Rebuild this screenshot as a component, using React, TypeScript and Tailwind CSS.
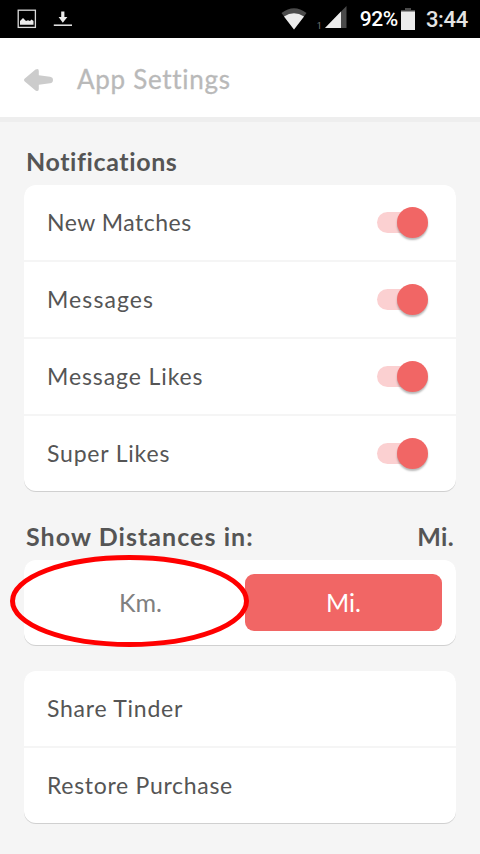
const notifications = ['New Matches', 'Messages', 'Message Likes', 'Super Likes'];
const links = ['Share Tinder', 'Restore Purchase'];

const textStyles: Record<string, string> = {
  'New Matches': 'tracking-[0.5px]',
  Messages: 'tracking-[1.1px]',
  'Message Likes': 'tracking-[0.9px]',
  'Super Likes': 'tracking-[0.8px]',
  'Share Tinder': 'tracking-[0.75px]',
  'Restore Purchase': 'tracking-[0.7px]',
};

const StatusBar = () => (
  <div className="flex h-[38px] shrink-0 items-center bg-black pt-px pr-3 pl-[17px] font-[Roboto,sans-serif] text-white">
    <svg className="-mt-px h-5 w-5" viewBox="0 0 20 20">
      <rect x="1.2" y="1.2" width="17.2" height="17.2" fill="none" stroke="#dcdcdc" strokeWidth="1.3" />
      <path d="M3 15.8V12l3-3 3 3 2-.8 2 .8 1.5-1.5 2 1.5v3.8z" fill="#ececec" />
    </svg>
    <svg className="-mt-px ml-4 h-5 w-5" viewBox="0 0 20 20">
      <path d="M8.2 2.5h3.2V8h3L9.8 13.8 5.6 8h2.6z" fill="#ececec" />
      <path d="M.8 16.2h18.2" stroke="#ececec" strokeWidth="1.5" />
    </svg>
    <svg className="-mt-0.5 ml-auto h-[22px] w-[26px]" viewBox="0 0 26 22">
      <path d="M0.5 5Q13-4.5 25.5 5L13 21.5z" fill="#4b4b4b" />
      <path d="M3 8.5Q13 2 23 8.5L13 21.5z" fill="#ececec" />
    </svg>
    <span className="mt-3.5 ml-2.5 w-1.5 text-[9px] leading-none text-[#777]">1</span>
    <svg className="-mt-[5px] mr-[11px] ml-0.5 h-[22px] w-[22px]" viewBox="0 0 22 22">
      <path d="M0 22L21.5 0V22z" fill="#4b4b4b" />
      <path d="M0 22L16 5.5V22z" fill="#ececec" />
    </svg>
    <span className="ml-0.5 text-[21px] leading-none font-medium tracking-[-0.4px]">92%</span>
    <svg className="-mt-0.5 ml-[3px] h-[22px] w-[14px]" viewBox="0 0 14 22">
      <path d="M4 0h6v2h4v2H0V2h4z" fill="#4b4b4b" />
      <path d="M0 3.5h14V22H0z" fill="#ececec" />
    </svg>
    <span className="ml-[11px] text-[22px] leading-none font-medium tracking-[-0.3px] text-[#e4e4e4]">3:44</span>
  </div>
);

const Toggle = () => (
  <div className="flex h-[21px] w-[51px] items-center justify-end rounded-l-full bg-gradient-to-r from-[#fbd0d1] from-70% to-transparent to-70%">
    <div className="h-[31px] w-[31px] shrink-0 rounded-full bg-[#f16665] shadow-[0_2px_2px_rgba(0,0,0,0.28)]" />
  </div>
);

const Row = ({ label, toggle }: { label: string; toggle?: boolean }) => (
  <div className="box-content flex h-[75px] items-center justify-between pr-7 pl-[23px]">
    <span className={`-mt-px text-[23px] leading-none text-[#555] ${textStyles[label]}`}>{label}</span>
    {toggle && <Toggle />}
  </div>
);

export default function App() {
  return (
    <div className="flex h-[854px] w-[480px] flex-col overflow-hidden bg-[#f5f5f5] font-[Lato,sans-serif]">
      <StatusBar />
      <header className="flex h-[84px] shrink-0 items-center border-b-[5px] border-[#eeeeee] bg-white pt-1 pl-6">
        <svg className="h-[22px] w-[29px]" viewBox="0 0 29 22">
          <path
            d="M0 11Q0 10.2.8 9.5L11.5.6Q14.8-1 14.8 2V6.3L26 7.7Q29 8.2 29 11T26 14.3L14.8 15.7V20Q14.8 23 11.5 21.4L.8 12.5Q0 11.8 0 11z"
            fill="#cccccc"
          />
        </svg>
        <h1 className="-mt-0.5 ml-6 text-[26px] leading-none tracking-[0.7px] text-[#b9b9b9] [-webkit-text-stroke:0.3px_#b9b9b9]">
          App Settings
        </h1>
      </header>

      <main className="px-6">
        <h2 className="flex h-[63px] items-end pb-2.5 pl-0.5 text-[25px] leading-7 font-bold tracking-[0.6px] text-[#555]">
          Notifications
        </h2>
        <div className="divide-y-2 divide-[#f5f5f5] rounded-xl bg-white shadow-[0_1px_0_#d0d0d0]">
          {notifications.map((label) => (
            <Row key={label} label={label} toggle />
          ))}
        </div>

        <h2 className="flex h-[69px] items-end justify-between pr-0.5 pb-2.5 pl-0.5 text-[25px] leading-7 font-bold text-[#555]">
          <span className="tracking-[1.05px]">Show Distances in:</span>
          <span className="tracking-[0.3px]">Mi.</span>
        </h2>
        <div className="relative flex h-[85px] items-center rounded-xl bg-white p-3.5 text-[25px] shadow-[0_1px_0_#d0d0d0]">
          <div className="flex h-[57px] w-[207px] items-center justify-center pr-0.5 text-[#808080]">Km.</div>
          <div className="flex h-[57px] w-[197px] items-center justify-center rounded-[9px] bg-[#f16665] text-white">
            Mi.
          </div>
          {/* Marker around the Km. option */}
          <svg className="absolute -top-[5px] -left-[14px] h-[92px] w-[239px]" viewBox="0 0 239 92">
            <ellipse cx="119.5" cy="46" rx="117" ry="43.5" fill="none" stroke="#ff0000" strokeWidth="5" />
          </svg>
        </div>

        <div className="mt-[26px] divide-y-2 divide-[#f5f5f5] rounded-xl bg-white shadow-[0_1px_0_#d0d0d0]">
          {links.map((label) => (
            <Row key={label} label={label} />
          ))}
        </div>
      </main>
    </div>
  );
}
